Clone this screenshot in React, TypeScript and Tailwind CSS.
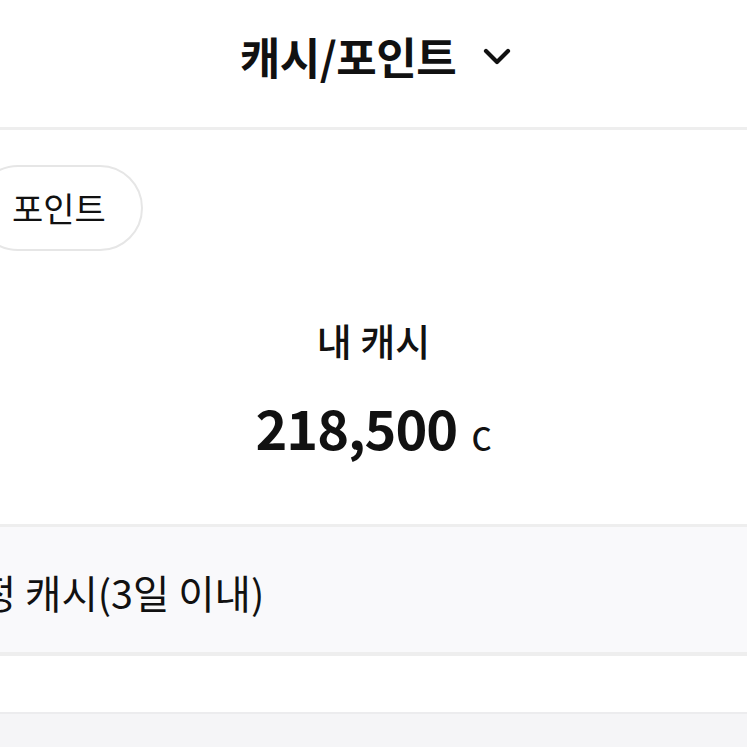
import React from "react";

export default function App() {
  return (
    <div
      className="w-[747px] h-[747px] overflow-hidden bg-white text-[#111111]"
      style={{ fontFamily: '"Noto Sans CJK KR", "Noto Sans", sans-serif' }}
    >
      <header className="h-[130px] border-b-[3px] border-[#eeeeee] flex items-center justify-center">
        <div className="flex items-center gap-[27px] mt-[-16px] ml-[4px]">
          <h1 className="text-[44px] font-bold leading-none tracking-[-0.5px]">캐시/포인트</h1>
          <svg width="28" height="20" viewBox="0 0 28 20" className="mt-[2px]">
            <path d="M3 4 L14 15 L25 4" fill="none" stroke="#111" strokeWidth="4.2" strokeLinecap="round" strokeLinejoin="round" />
          </svg>
        </div>
      </header>

      <div className="flex flex-col">
        <div className="mt-[35px] ml-[-25px] self-start h-[86px] px-[35px] rounded-full border-[2px] border-[#e6e6e6] flex items-center">
          <span className="text-[34px] leading-none">포인트</span>
        </div>

        <div className="mt-[63px] flex justify-center">
          <span className="text-[38px] font-medium leading-[52px]">내 캐시</span>
        </div>

        <div className="mt-[29px] flex justify-center items-baseline h-[64px]">
          <span className="text-[54px] font-bold leading-[64px] tracking-[-1px]">218,500</span>
          <span className="text-[40px] leading-[64px] ml-[14px]">c</span>
        </div>
      </div>

      <div className="mt-[65px] border-t-[3px] border-b-[4px] border-[#eeeeee] bg-[#f9f9fb] h-[132px] flex items-center">
        <span className="text-[39.5px] leading-none ml-[-138px] mt-[4px] whitespace-nowrap">소멸 예정 캐시(3일 이내)</span>
      </div>

      <div className="h-[56px] bg-white" />
      <div className="border-t-[2px] border-[#ececee] bg-[#f5f5f7] h-[60px]" />
    </div>
  );
}
